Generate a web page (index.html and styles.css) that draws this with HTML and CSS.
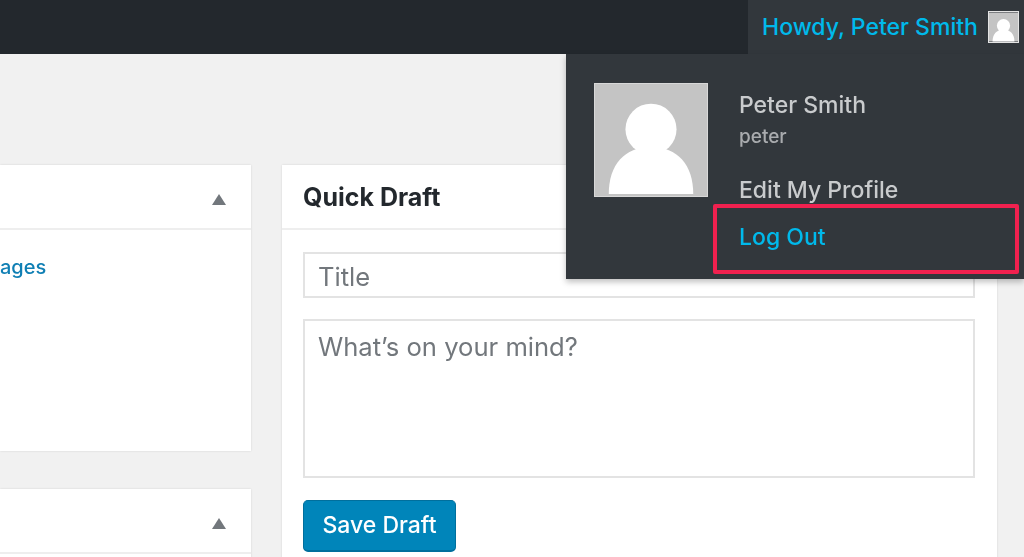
FILE: index.html
```html
<!DOCTYPE html>
<html lang="en">
<head>
<meta charset="utf-8">
<title>Quick Draft</title>
<link rel="stylesheet" href="styles.css">
</head>
<body>
<div class="page">
  <header class="bar">
    <div class="account">
      <span class="howdy">Howdy, Peter Smith</span>
      <svg class="avatar-small" viewBox="0 0 114 114"><rect width="114" height="114" fill="#c4c4c4"/><circle cx="57" cy="52" r="26" fill="#fff"/><path d="M14 114c0-30 16-46 43-46s43 16 43 46z" fill="#fff"/></svg>
      <div class="menu">
        <svg class="avatar-large" viewBox="0 0 114 114"><rect width="114" height="114" fill="#c4c4c4"/><circle cx="57" cy="46" r="26" fill="#fff"/><path d="M14 112c0-30 16-48 43-48s43 18 43 48z" fill="#fff"/></svg>
        <div class="menu-links">
          <div class="menu-name">Peter Smith</div>
          <div class="menu-user">peter</div>
          <div class="menu-edit">Edit My Profile</div>
          <div class="menu-logout">Log Out</div>
        </div>
        <div class="highlight"></div>
      </div>
    </div>
  </header>
  <main class="main">
    <section class="col-left">
      <div class="card card-a">
        <div class="card-head"><span class="arrow"></span></div>
        <div class="card-body"><a class="link">ages</a></div>
      </div>
      <div class="card card-b">
        <div class="card-head"><span class="arrow"></span></div>
      </div>
    </section>
    <section class="card col-right">
      <div class="card-head"><h2 class="card-title">Quick Draft</h2></div>
      <div class="form">
        <div class="field field-title">Title</div>
        <div class="field field-text">What’s on your mind?</div>
        <div class="button">Save Draft</div>
      </div>
    </section>
  </main>
</div>
</body>
</html>
```
FILE: styles.css
```css
* { box-sizing: border-box; }
html, body { margin: 0; padding: 0; }
body {
  background: #f1f1f1;
  font-family: Inter, "Liberation Sans", sans-serif;
  overflow: hidden;
}
.page {
  width: 1024px;
  height: 557px;
  overflow: hidden;
  position: relative;
  filter: blur(0.5px);
}
.bar {
  height: 54px;
  background: #23282d;
  display: flex;
  justify-content: flex-end;
}
.account {
  width: 276px;
  background: #32373c;
  display: flex;
  align-items: center;
  padding-left: 14px;
  position: relative;
}
.howdy {
  color: #00b9eb;
  font-size: 23px;
  font-weight: 500;
  line-height: 52px;
  width: 226px;
  white-space: nowrap;
}
.avatar-small {
  width: 31px;
  height: 32px;
  border: 1px solid #e4e4e4;
  margin-top: -1px;
}
.menu {
  position: absolute;
  top: 54px;
  right: 0;
  width: 458px;
  height: 225px;
  background: #32373c;
  box-shadow: 0 3px 6px rgba(0, 0, 0, 0.25);
  padding: 29px 0 0 28px;
  display: flex;
  z-index: 2;
}
.avatar-large {
  width: 114px;
  height: 114px;
  border: 1px solid #d8d8d8;
  flex: none;
}
.menu-links {
  margin-left: 31px;
  font-size: 23px;
  font-weight: 500;
  color: #c9cbcd;
}
.menu-name { line-height: 28px; margin-top: 8px; }
.menu-user { font-size: 19px; line-height: 22px; margin-top: 7px; color: #a9abae; }
.menu-edit { line-height: 28px; margin-top: 28px; }
.menu-logout { line-height: 28px; margin-top: 19px; color: #00b9eb; }
.highlight {
  position: absolute;
  left: 147px;
  top: 150px;
  width: 306px;
  height: 70px;
  border: 4px solid #f0214f;
  border-radius: 2px;
}
.main {
  display: flex;
  padding-top: 111px;
  gap: 31px;
  align-items: flex-start;
}
.col-left {
  width: 251px;
  display: flex;
  flex-direction: column;
  gap: 38px;
}
.card {
  background: #fff;
  box-shadow: 0 0 2px rgba(0, 0, 0, 0.12);
}
.card-a { height: 286px; }
.card-b { height: 100px; }
.col-right { width: 715px; height: 420px; }
.card-head {
  height: 65px;
  border-bottom: 2px solid #eeeeee;
  display: flex;
  align-items: center;
  justify-content: flex-end;
  padding: 0 25px 0 21px;
}
.card-title {
  margin: 0 auto 0 0;
  font-size: 25px;
  font-weight: 700;
  color: #23282d;
}
.arrow {
  width: 0;
  height: 0;
  border-left: 7px solid transparent;
  border-right: 7px solid transparent;
  border-bottom: 11px solid #72777c;
  margin-top: 6px;
}
.card-body { padding-top: 24px; }
.link {
  color: #0f7fb4;
  font-size: 20px;
  font-weight: 500;
  line-height: 26px;
}
.form {
  padding: 22px 22px 0 21px;
  display: flex;
  flex-direction: column;
  align-items: flex-start;
}
.field {
  width: 672px;
  background: #fff;
  border: 2px solid #e3e3e3;
  color: #72777c;
  font-size: 25.6px;
  padding-left: 13px;
}
.field-title { height: 46px; line-height: 45px; }
.field-text { height: 159px; margin-top: 21px; padding-top: 8px; line-height: 36px; }
.button {
  margin-top: 22px;
  width: 153px;
  height: 52px;
  background: #0085ba;
  border: 1px solid #006f9d;
  border-bottom-width: 2px;
  border-radius: 5px;
  color: #fff;
  font-size: 23px;
  font-weight: 500;
  line-height: 49px;
  text-align: center;
}
```
